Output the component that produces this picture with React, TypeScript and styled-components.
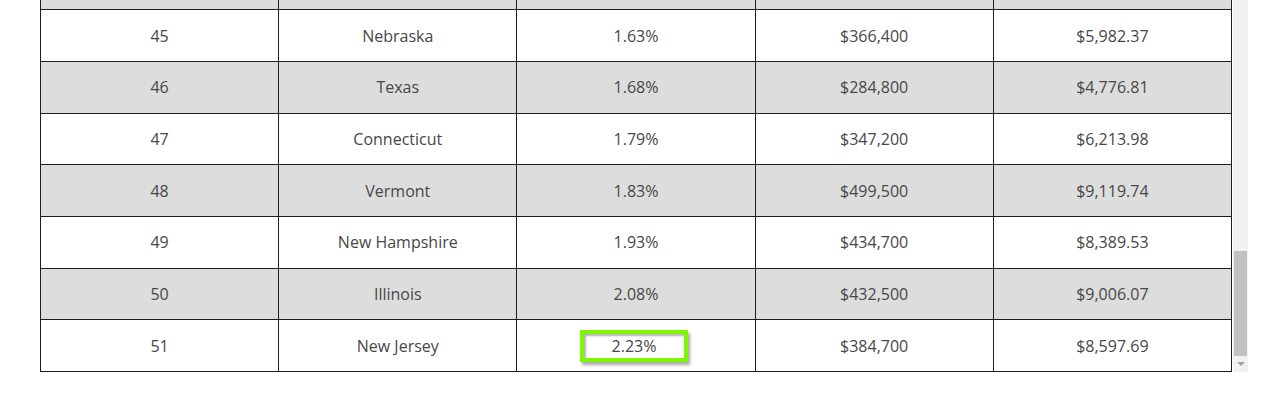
import React from "react";
import styled, { createGlobalStyle } from "styled-components";

const GlobalStyle = createGlobalStyle`
  html, body { margin: 0; padding: 0; background: #ffffff; }
  body { font-family: "Open Sans", "Noto Sans", Arial, sans-serif; }
`;

const Page = styled.div`
  padding-left: 40px;
`;

const Frame = styled.div`
  display: flex;
  align-items: flex-end;
  height: 372px;
  overflow: hidden;
`;

const TableClip = styled.div`
  width: 1192px;
  display: flex;
  flex-direction: column;
  justify-content: flex-end;
  height: 100%;
  overflow: hidden;
`;

const Table = styled.table`
  width: 100%;
  border-collapse: collapse;
  table-layout: fixed;
  flex-shrink: 0;
`;

const Row = styled.tr<{ $shaded: boolean }>`
  background: ${(p) => (p.$shaded ? "#dddddd" : "#ffffff")};
`;

const Cell = styled.td`
  height: 50.667px;
  padding: 0;
  border: 1px solid #1e1e1e;
  text-align: center;
  vertical-align: middle;
  font-size: 16px;
  color: #474747;
`;

const Highlight = styled.span`
  display: inline-block;
  box-sizing: border-box;
  width: 108px;
  height: 32px;
  line-height: 24px;
  margin-right: 4px;
  border: 4px solid #7df800;
  background: #ffffff;
  box-shadow: inset 2px 2px 2px rgba(0, 0, 0, 0.3), 2px 3px 3px rgba(0, 0, 0, 0.35);
`;

const Track = styled.div`
  width: 15px;
  margin-left: 1px;
  height: 100%;
  background: #f1f1f1;
  display: flex;
  flex-direction: column;
  align-items: center;
  flex-shrink: 0;
`;

const TrackSpace = styled.div`
  flex: 1;
`;

const Thumb = styled.div`
  width: 13px;
  height: 105px;
  background: #c1c1c1;
`;

const ArrowButton = styled.div`
  width: 15px;
  height: 16px;
  display: flex;
  align-items: center;
  justify-content: center;
`;

const ArrowDown = styled.div`
  width: 0;
  height: 0;
  border-left: 4px solid transparent;
  border-right: 4px solid transparent;
  border-top: 4px solid #a3a3a3;
`;

type Item = { rank: number; state: string; rate: string; home: string; tax: string };

const data: Item[] = [
  { rank: 45, state: "Nebraska", rate: "1.63%", home: "$366,400", tax: "$5,982.37" },
  { rank: 46, state: "Texas", rate: "1.68%", home: "$284,800", tax: "$4,776.81" },
  { rank: 47, state: "Connecticut", rate: "1.79%", home: "$347,200", tax: "$6,213.98" },
  { rank: 48, state: "Vermont", rate: "1.83%", home: "$499,500", tax: "$9,119.74" },
  { rank: 49, state: "New Hampshire", rate: "1.93%", home: "$434,700", tax: "$8,389.53" },
  { rank: 50, state: "Illinois", rate: "2.08%", home: "$432,500", tax: "$9,006.07" },
  { rank: 51, state: "New Jersey", rate: "2.23%", home: "$384,700", tax: "$8,597.69" },
];

export default function App() {
  return (
    <>
      <GlobalStyle />
      <Page>
        <Frame>
          <TableClip>
            <Table>
              <tbody>
                <Row $shaded>
                  <Cell />
                  <Cell />
                  <Cell />
                  <Cell />
                  <Cell />
                </Row>
                {data.map((d) => (
                  <Row key={d.rank} $shaded={d.rank % 2 === 0}>
                    <Cell>{d.rank}</Cell>
                    <Cell>{d.state}</Cell>
                    <Cell>{d.rank === 51 ? <Highlight>{d.rate}</Highlight> : d.rate}</Cell>
                    <Cell>{d.home}</Cell>
                    <Cell>{d.tax}</Cell>
                  </Row>
                ))}
              </tbody>
            </Table>
          </TableClip>
          <Track>
            <TrackSpace />
            <Thumb />
            <ArrowButton>
              <ArrowDown />
            </ArrowButton>
          </Track>
        </Frame>
      </Page>
    </>
  );
}
